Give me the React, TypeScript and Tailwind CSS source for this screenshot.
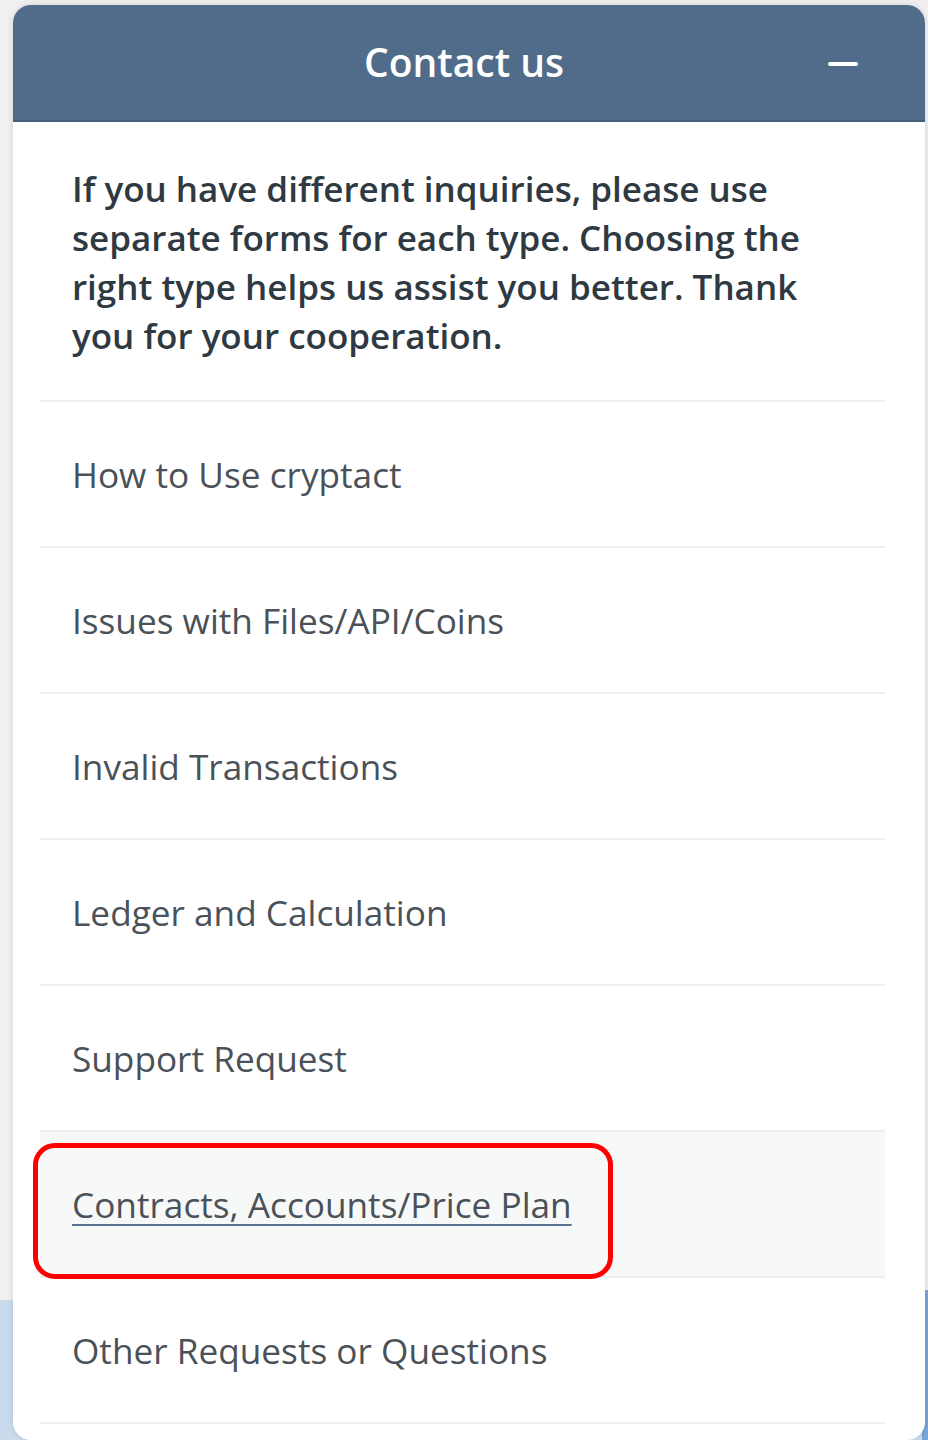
export default function App() {
  const items = [
    "How to Use cryptact",
    "Issues with Files/API/Coins",
    "Invalid Transactions",
    "Ledger and Calculation",
    "Support Request",
    "Contracts, Accounts/Price Plan",
    "Other Requests or Questions",
  ]

  return (
    <div
      className="relative min-h-[1440px] w-[928px] overflow-hidden bg-[#f1f0f0]"
      style={{ fontFamily: '"Open Sans", "Noto Sans", sans-serif' }}
    >
      {/* backdrop strip behind the panel */}
      <div className="absolute bottom-0 left-0 right-0 h-[140px] bg-[#c9dbed]" />
      <div className="absolute bottom-0 right-0 h-[150px] w-[6px] bg-[#78a6d8]" />

      <div className="relative ml-[13px] mr-[3px] pt-[5px]">
        <div className="overflow-hidden rounded-[18px] bg-white shadow-[0_0_6px_rgba(0,0,0,0.12)]">
          <div className="relative flex h-[117px] items-center justify-center border-b-2 border-[#45607e] bg-[#506c8a] pr-[10px]">
            <span className="text-[39px] font-semibold text-white">Contact us</span>
            <span className="absolute right-[67px] top-[57px] h-[4px] w-[30px] rounded-full bg-white" />
          </div>

          <div className="pb-[16px] pl-[27px] pr-[40px]">
            <p className="w-[822px] px-[32px] pb-[40px] pt-[42px] text-[35px] font-semibold leading-[49px] text-[#2f3942]">
              If you have different inquiries, please use separate forms for each type. Choosing the right type helps us assist you better. Thank you for your cooperation.
            </p>

            <ul className="border-t-2 border-[#eceeef]">
              {items.map((item) => {
                const active = item === "Contracts, Accounts/Price Plan"
                return (
                  <li
                    key={item}
                    className={`relative flex h-[146px] items-center border-b-2 border-[#eceeef] px-[32px] ${
                      active ? "bg-[#f7f8f8]" : ""
                    }`}
                  >
                    <span
                      className={`text-[35.2px] text-[#4a5158] ${
                        active ? "underline decoration-[#5a7391] decoration-2 underline-offset-[6px]" : ""
                      }`}
                    >
                      {item}
                    </span>
                    {active && (
                      <span className="absolute left-[-7px] top-[11px] h-[136px] w-[580px] rounded-[22px] border-[5px] border-[#ff0000]" />
                    )}
                  </li>
                )
              })}
            </ul>
          </div>
        </div>
      </div>
    </div>
  )
}
